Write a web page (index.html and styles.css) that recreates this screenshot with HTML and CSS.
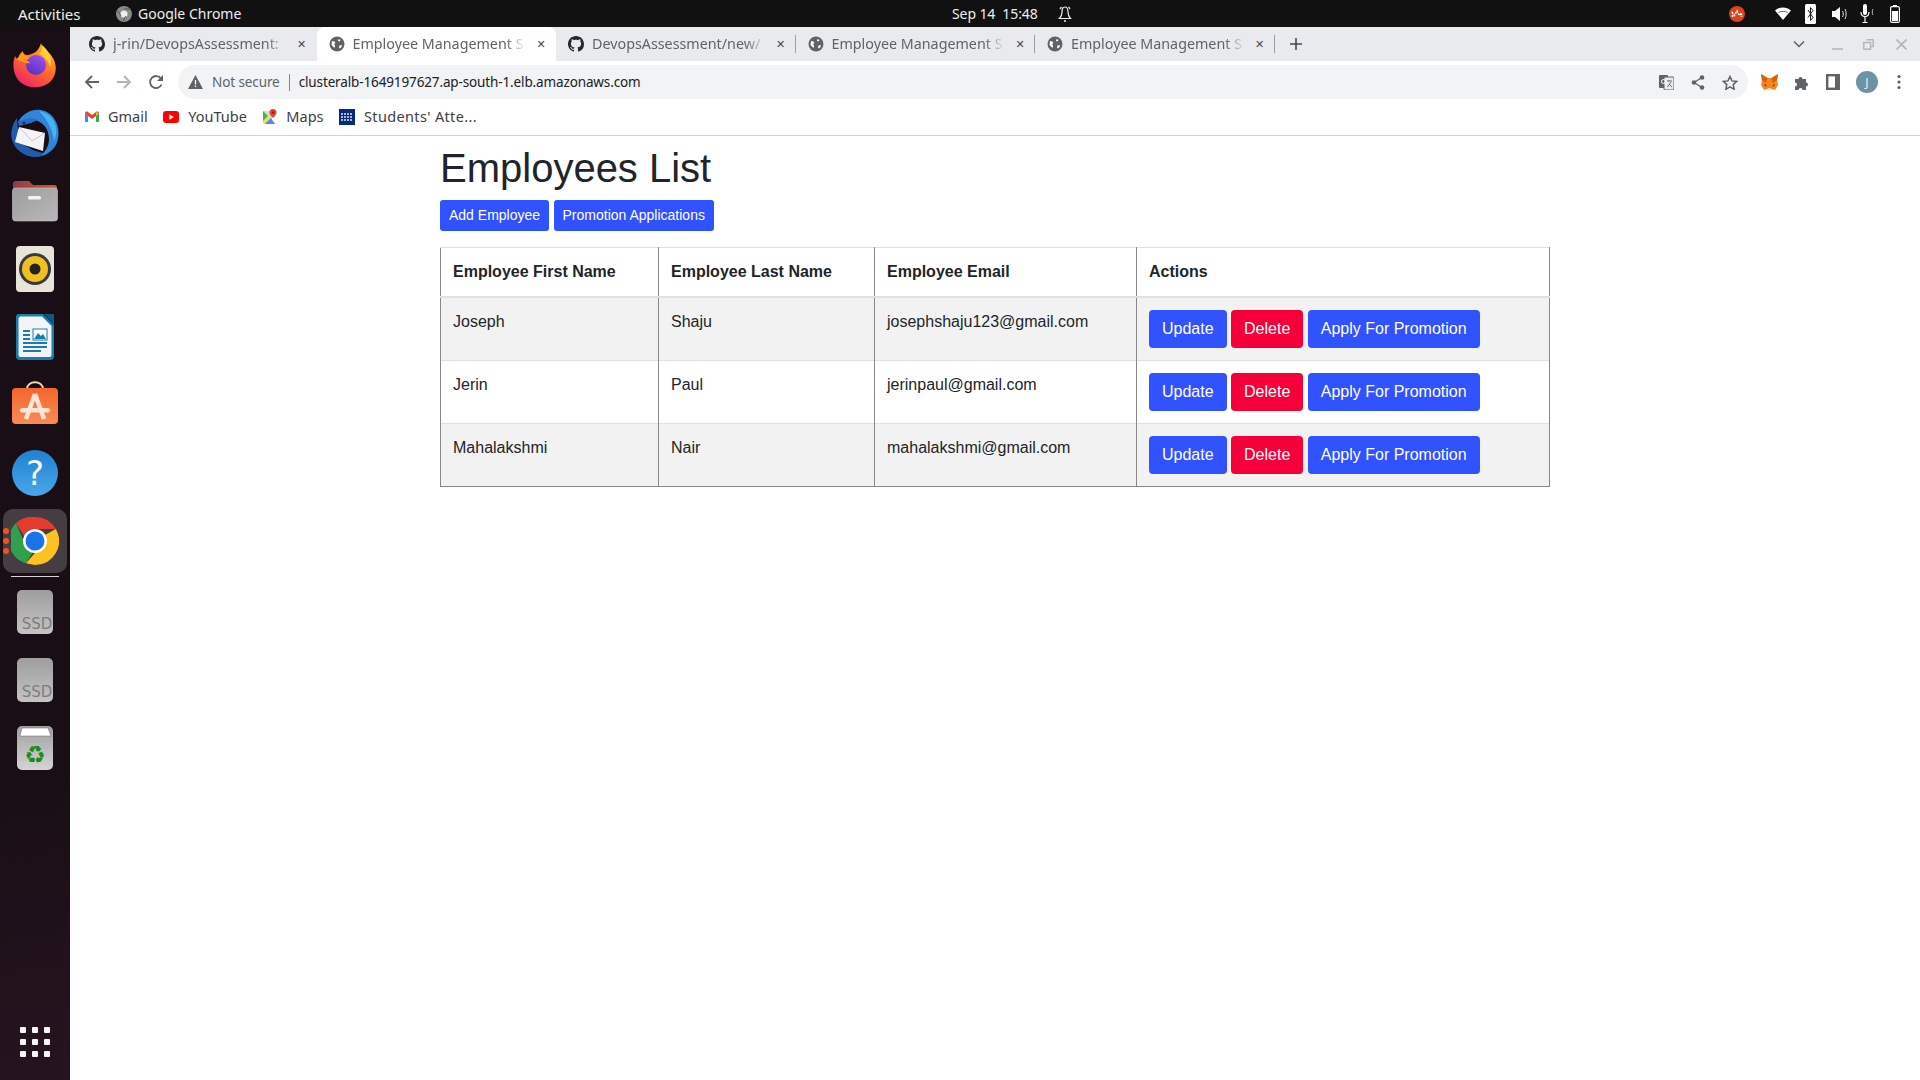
FILE: index.html
```html
<!DOCTYPE html>
<html lang="en">
<head>
    <meta charset="UTF-8">
    <title>Employee Management System</title>
    <link rel="stylesheet" href="styles.css">
</head>
<body>
    <svg class="defs" width="0" height="0">
        <symbol id="globe" viewBox="0 0 16 16">
            <circle cx="8" cy="8" r="7.5" fill="#5f6368"/>
            <path d="M3 5l2.500 .5 1 1.500-1.500 1 1 1.500 0 2-1 0L2.500 9zM9.500 3l2 1-1 1.500-1.500-.5zM10.500 9.500l2.500-.5-.5 2-1.500 1.500-1-1z" fill="#fff"/>
        </symbol>
        <symbol id="github" viewBox="0 0 16 16">
            <path fill="#24292e" d="M8 0C3.580 0 0 3.580 0 8c0 3.540 2.290 6.530 5.470 7.590.4.070.55-.17.55-.38 0-.19-.01-.82-.01-1.490-2.010.37-2.530-.49-2.690-.94-.09-.23-.48-.94-.82-1.130-.28-.15-.68-.52-.01-.53.63-.01 1.080.58 1.230.82.720 1.210 1.870.87 2.330.66.070-.52.280-.87.510-1.070-1.780-.2-3.640-.89-3.640-3.950 0-.87.310-1.590.820-2.150-.08-.2-.36-1.020.08-2.120 0 0 .67-.21 2.200.82.640-.18 1.320-.27 2-.27s1.360.09 2 .27c1.530-1.040 2.200-.82 2.200-.82.440 1.100.16 1.920.08 2.120.51.560.82 1.270.82 2.150 0 3.070-1.870 3.750-3.650 3.950.29.250.54.730.54 1.480 0 1.070-.01 1.930-.01 2.200 0 .21.150.46.550.38A8.010 8.010 0 0 0 16 8c0-4.420-3.580-8-8-8z"/>
        </symbol>
    </svg>

    <div class="topbar">
        <span class="topbar-activities">Activities</span>
        <span class="topbar-app">
            <svg width="16" height="16" viewBox="0 0 16 16"><circle cx="8" cy="8" r="8" fill="#8a8a8a"/><circle cx="8" cy="8" r="3.500" fill="#eee"/><path d="M8 3h6M5 10L2 5M10 10l-3 5" stroke="#555" stroke-width="1"/></svg>
            Google Chrome
        </span>
        <span class="topbar-clock">
            Sep 14&nbsp; 15:48
            <svg class="bell" width="14" height="18" viewBox="0 0 14 18" fill="none" stroke="#eee" stroke-width="1.200"><path d="M7 2C4.500 2 4 4 4 7c0 3-1 5-2.500 6.500h11C11 12 10 10 10 7c0-3-.5-5-3-5z"/><path d="M2 4C2.500 3 3 2.500 3.500 2M12 4c-.5-1-1-1.500-1.500-2"/><path d="M6 16h2" stroke-width="1.600"/></svg>
        </span>
        <div class="tray">
            <svg width="16" height="16" viewBox="0 0 16 16"><circle cx="8" cy="8" r="8" fill="#d8441c"/><path d="M3.500 11V7l2 2.500L8 5l2.500 4.500 2-2.500v4" fill="none" stroke="#fff" stroke-width="1.500" stroke-dasharray="2 1"/></svg>
            <svg class="tray-wifi" width="16" height="14" viewBox="0 0 16 14"><path d="M0 3.500C4.500-.5 11.500-.5 16 3.500L8 13z" fill="#fff"/><path d="M3.500 5.500c2.500-1.500 6.500-1.500 9 0" stroke="#222" stroke-width=".7" fill="none"/></svg>
            <svg class="tray-bt" width="11" height="20" viewBox="0 0 11 20"><rect width="11" height="20" rx="1.500" fill="#fff"/><path d="M3 6l5 7.500-2.500 3v-13L8 6.500 3 13.500" fill="none" stroke="#222" stroke-width="1"/></svg>
            <svg class="tray-vol" width="15" height="16" viewBox="0 0 15 16"><path d="M0 5h3l5-4v14l-5-4H0z" fill="#fff"/><path d="M10.500 5c1 2 1 4 0 6M13 3c1.500 3 1.500 7 0 10" stroke="#ddd" fill="none"/></svg>
            <svg class="tray-mic" width="16" height="20" viewBox="0 0 16 20"><rect x="3" y="0" width="4" height="11" rx="2" fill="#fff"/><path d="M1 8c0 6 8 6 8 0M5 13v5M2.500 18.500h5" stroke="#fff" fill="none" stroke-width="1.200"/><path d="M13 5c-1 2-1 4 0 6" stroke="#bbb" fill="none"/></svg>
            <svg class="tray-bat" width="10" height="18" viewBox="0 0 10 18"><rect x="3" y="0" width="4" height="2" fill="#fff"/><rect x=".6" y="1.600" width="8.800" height="15.800" rx="1.500" fill="none" stroke="#fff" stroke-width="1.200"/><rect x="2" y="6" width="6" height="10" fill="#fff"/></svg>
        </div>
    </div>

    <div class="desktop">
        <nav class="dock">
            <div class="dock-slot">
                <svg width="46" height="46" viewBox="0 0 46 46">
                    <defs>
                        <linearGradient id="ffbody" x1="0.800" y1="0" x2="0.200" y2="1"><stop offset="0" stop-color="#ffbd30"/><stop offset=".5" stop-color="#ff6a2a"/><stop offset="1" stop-color="#e81e6e"/></linearGradient>
                        <linearGradient id="ffglobe" x1="0.800" y1="0" x2="0.200" y2="1"><stop offset="0" stop-color="#9a50f0"/><stop offset="1" stop-color="#5b2fc0"/></linearGradient>
                    </defs>
                    <path d="M29 1c1 5 6 7 10 12 7 9 6 20-1 27-8 7-22 7-30 0C1 33 0 22 3 14c1 2 2 3 3 4 0-4 2-7 5-9 0 3 2 4 5 4 6-1 11-4 13-12z" fill="url(#ffbody)"/>
                    <circle cx="24" cy="23" r="10" fill="url(#ffglobe)"/>
                    <path d="M4 17c4-2 5-6 7-7 0 3 3 4 7 5-2 3-4 2-7 3 3 0 6 1 7 3-4 1-9-2-14-4z" fill="#ff9a1c"/>
                    <path d="M30 3c7 6 11 13 8 22-2-7-6-11-11-13 2-2 4-5 3-9z" fill="#ffd23a"/>
                </svg>
            </div>
            <div class="dock-slot">
                <svg width="48" height="50" viewBox="0 0 48 50">
                    <path d="M6 10C1 16-1 25 1 32c3 10 13 17 23 17 6 0 10-2 13-4-8 0-14-2-20-6L8 34z" fill="#1f5cae"/>
                    <path d="M7 14C14 1 32-3 42 9c8 10 7 26-1 33-3 3-7 5-11 6 5-5 8-11 8-17 0-10-6-17-14-19-6-1-12 0-17 2z" fill="#2f86d8"/>
                    <path d="M28 3c8 1 15 7 17 16 1 5 0 10-2 14-1-10-6-21-15-30z" fill="#48b4ef"/>
                    <path d="M7 14c5-3 14-5 20-2l-7 3-12 3z" fill="#2a6cc0"/>
                    <path d="M8 19l26 6-2 18L4 34z" fill="#f4f4f8"/>
                    <path d="M8 19l13 14 13-8" fill="none" stroke="#c4c6d0" stroke-width="1"/>
                    <circle cx="13" cy="15" r="1.500" fill="#16325c"/>
                </svg>
            </div>
            <div class="dock-slot">
                <svg width="46" height="42" viewBox="0 0 46 42">
                    <defs>
                        <linearGradient id="folderback" x1="0" y1="0" x2="1" y2="0"><stop offset="0" stop-color="#8e3a4c"/><stop offset="1" stop-color="#d4592c"/></linearGradient>
                        <linearGradient id="folderfront" x1="0" y1="0" x2="1" y2="1"><stop offset="0" stop-color="#9d9d9d"/><stop offset="1" stop-color="#b8b8b8"/></linearGradient>
                    </defs>
                    <path d="M1 4a3 3 0 0 1 3-3h13l4 4h21a3 3 0 0 1 3 3v14H1z" fill="url(#folderback)"/>
                    <rect x="0.500" y="8" width="45" height="33" rx="3" fill="url(#folderfront)" stroke="#c8c8c8" stroke-width=".6"/>
                    <rect x="16" y="16" width="13" height="3.500" rx="1.500" fill="#f4f4f4"/>
                </svg>
            </div>
            <div class="dock-slot">
                <svg width="38" height="46" viewBox="0 0 38 46">
                    <rect width="38" height="46" rx="4" fill="#e8e4da"/>
                    <circle cx="19" cy="23" r="16" fill="#3a3a3c"/>
                    <circle cx="19" cy="23" r="13" fill="#f0c020"/>
                    <circle cx="19" cy="23" r="5.500" fill="#222"/>
                </svg>
            </div>
            <div class="dock-slot">
                <svg width="38" height="46" viewBox="0 0 38 46">
                    <path d="M3 0h24l11 11v31a4 4 0 0 1-4 4H4a4 4 0 0 1-4-4V3a3 3 0 0 1 3-3z" fill="#1c7cae"/>
                    <path d="M4 2.500h22L35.500 12v29a2 2 0 0 1-2 2h-29a2 2 0 0 1-2-2V4z" fill="#f2f4f6"/>
                    <path d="M28 0l10 11V0z" fill="#14557e"/>
                    <path d="M7 17h7M7 21h7M7 25h7M7 29h24M7 33h24M7 37h18" stroke="#1c7cae" stroke-width="2"/>
                    <rect x="17" y="15" width="14" height="11" fill="#fff" stroke="#1c7cae"/>
                    <path d="M18 25l4-6 3 3 2-2 3 5z" fill="#1c7cae"/>
                </svg>
            </div>
            <div class="dock-slot dock-slot-bag">
                <svg width="46" height="43" viewBox="0 0 46 43">
                    <defs><linearGradient id="bag" x1="0" y1="0" x2="0" y2="1"><stop offset="0" stop-color="#f4662a"/><stop offset="1" stop-color="#f88c55"/></linearGradient></defs>
                    <path d="M15 8c0-9 16-9 16 0" fill="none" stroke="#f6d8b0" stroke-width="2"/>
                    <rect y="7" width="46" height="36" rx="4" fill="url(#bag)"/>
                    <path d="M23 13L14 38M23 13l9 25" stroke="#fde6d6" stroke-width="4.500" fill="none"/>
                    <rect x="8" y="27" width="30" height="4.500" rx="2" fill="#fde6d6"/>
                </svg>
            </div>
            <div class="dock-slot">
                <svg width="46" height="46" viewBox="0 0 46 46">
                    <defs><linearGradient id="help" x1="0" y1="0" x2="0" y2="1"><stop offset="0" stop-color="#2180d0"/><stop offset="1" stop-color="#48a8ea"/></linearGradient></defs>
                    <circle cx="23" cy="23" r="23" fill="url(#help)"/>
                    <text class="help-mark" x="23" y="35" text-anchor="middle">?</text>
                </svg>
            </div>
            <div class="dock-slot dock-slot-active">
                <div class="dock-running">
                    <span class="dock-dot"></span>
                    <span class="dock-dot"></span>
                    <span class="dock-dot"></span>
                </div>
                <svg width="48" height="48" viewBox="0 0 48 48">
                    <path d="M24 0a24 24 0 0 1 20.800 12H24a12 12 0 0 0-11 7L5 6A24 24 0 0 1 24 0z" fill="#e33b2e"/>
                    <path d="M5 6l8.500 20a12 12 0 0 0 8 9.700L15 46.300A24 24 0 0 1 5 6z" fill="#2fa04c"/>
                    <path d="M44.800 12A24 24 0 0 1 24 48l-9-1.700 9.500-11A12 12 0 0 0 34 18l10.800-6z" fill="#fcc31e"/>
                    <circle cx="24" cy="24" r="12" fill="#fff"/>
                    <circle cx="24" cy="24" r="9.500" fill="#1a73e8"/>
                </svg>
            </div>
            <div class="dock-sep"></div>
            <div class="dock-slot">
                <svg width="36" height="44" viewBox="0 0 36 44">
                    <defs><linearGradient id="ssd" x1="0" y1="0" x2="0" y2="1"><stop offset="0" stop-color="#9e9e9e"/><stop offset="1" stop-color="#c4c4c4"/></linearGradient></defs>
                    <rect width="36" height="44" rx="5" fill="url(#ssd)"/>
                    <text class="ssd-label" x="20" y="39" text-anchor="middle">SSD</text>
                </svg>
            </div>
            <div class="dock-slot">
                <svg width="36" height="44" viewBox="0 0 36 44">
                    <rect width="36" height="44" rx="5" fill="url(#ssd)"/>
                    <text class="ssd-label" x="20" y="39" text-anchor="middle">SSD</text>
                </svg>
            </div>
            <div class="dock-slot">
                <svg width="36" height="44" viewBox="0 0 36 44">
                    <defs><linearGradient id="bin" x1="0" y1="0" x2="0" y2="1"><stop offset="0" stop-color="#a0a0a0"/><stop offset="1" stop-color="#d4d4d4"/></linearGradient></defs>
                    <rect width="36" height="44" rx="5" fill="url(#bin)"/>
                    <path d="M5 2h26l3 8H3z" fill="#fff" stroke="#666" stroke-width=".5"/>
                    <text class="recycle" x="18" y="37" text-anchor="middle">♻</text>
                </svg>
            </div>
            <div class="dock-grid">
                <span></span><span></span><span></span>
                <span></span><span></span><span></span>
                <span></span><span></span><span></span>
            </div>
        </nav>

        <div class="browser">
            <div class="tabstrip">
                <div class="tab">
                    <svg class="favicon"><use href="#github"/></svg>
                    <span class="tab-title tab-title-first">j-rin/DevopsAssessment:</span>
                    <span class="tab-close">✕</span>
                </div>
                <div class="tab tab-active">
                    <svg class="favicon"><use href="#globe"/></svg>
                    <span class="tab-title">Employee Management S</span>
                    <span class="tab-close">✕</span>
                </div>
                <div class="tab tab-sep">
                    <svg class="favicon"><use href="#github"/></svg>
                    <span class="tab-title">DevopsAssessment/new/</span>
                    <span class="tab-close">✕</span>
                </div>
                <div class="tab tab-sep">
                    <svg class="favicon"><use href="#globe"/></svg>
                    <span class="tab-title">Employee Management S</span>
                    <span class="tab-close">✕</span>
                </div>
                <div class="tab tab-sep">
                    <svg class="favicon"><use href="#globe"/></svg>
                    <span class="tab-title">Employee Management S</span>
                    <span class="tab-close">✕</span>
                </div>
                <svg class="tab-new" width="14" height="14" viewBox="0 0 14 14"><path d="M7 1v12M1 7h12" stroke="#45494e" stroke-width="1.600"/></svg>
                <div class="window-btns">
                    <svg width="12" height="8" viewBox="0 0 12 8"><path d="M1 1.500l5 5 5-5" fill="none" stroke="#5f6368" stroke-width="1.500"/></svg>
                    <svg class="win-min" width="11" height="11" viewBox="0 0 11 11"><path d="M0 10h11" stroke="#b5b7ba" stroke-width="1.600"/></svg>
                    <svg class="win-max" width="11" height="11" viewBox="0 0 11 11"><path d="M3.500.8h6.700v6.700H7.500" fill="none" stroke="#b5b7ba" stroke-width="1.500"/><rect x=".8" y="3.500" width="6.700" height="6.700" fill="none" stroke="#b5b7ba" stroke-width="1.500"/></svg>
                    <svg class="win-close" width="11" height="11" viewBox="0 0 11 11"><path d="M.5.500l10 10M10.500.5l-10 10" stroke="#b5b7ba" stroke-width="1.700"/></svg>
                </div>
            </div>

            <div class="toolbar">
                <svg class="nav-btn" width="16" height="16" viewBox="0 0 16 16"><path d="M15 8H2M8 2L2 8l6 6" fill="none" stroke="#5f6368" stroke-width="1.800"/></svg>
                <svg class="nav-btn" width="16" height="16" viewBox="0 0 16 16"><path d="M1 8h13M8 2l6 6-6 6" fill="none" stroke="#b2b5b9" stroke-width="1.800"/></svg>
                <svg class="nav-btn" width="16" height="16" viewBox="0 0 16 16"><path d="M13.600 10.500A6 6 0 1 1 13 4.500" fill="none" stroke="#5f6368" stroke-width="1.800"/><path d="M15 1v6H9z" fill="#5f6368"/></svg>
                <div class="omnibox">
                    <svg width="15" height="14" viewBox="0 0 15 14"><path d="M7.500 0L15 14H0z" fill="#5f6368"/><path d="M7.500 5v4.500M7.500 10.500V12" stroke="#fff" stroke-width="1.300"/></svg>
                    <span class="omni-warn">Not secure</span>
                    <span class="omni-url">clusteralb-1649197627.ap-south-1.elb.amazonaws.com</span>
                    <div class="omni-icons">
                        <svg width="15" height="15" viewBox="0 0 15 15"><rect width="9" height="13" rx="1" fill="#5f6368"/><rect x="5" y="2" width="10" height="13" rx="1" fill="#e8eaed" stroke="#5f6368"/><circle cx="4.500" cy="6.500" r="2" fill="none" stroke="#fff"/><path d="M8 6h5M10 5v1M8.500 12l3.500-5M13 12l-3-3" stroke="#5f6368" stroke-width=".9" fill="none"/></svg>
                        <svg width="14" height="15" viewBox="0 0 14 15"><path d="M11 2.500L3 7.500l8 5" fill="none" stroke="#5f6368" stroke-width="1.300"/><circle cx="11" cy="2.500" r="2.300" fill="#5f6368"/><circle cx="3" cy="7.500" r="2.300" fill="#5f6368"/><circle cx="11" cy="12.500" r="2.300" fill="#5f6368"/></svg>
                        <svg width="16" height="15" viewBox="0 0 16 15"><path d="M8 1.500l2 4.400 4.800.5-3.600 3.200 1 4.700L8 11.900l-4.200 2.400 1-4.700L1.200 6.400 6 5.900z" fill="none" stroke="#5f6368" stroke-width="1.500"/></svg>
                    </div>
                </div>
                <div class="toolbar-ext">
                    <svg width="17" height="17" viewBox="0 0 17 17"><path d="M0 0l6.500 4h4L17 0l-1 6 1 5-3 5-3.500-1-2 .8-2-.8L3 16l-3-5 1-5z" fill="#f6851b"/><path d="M0 0l6.500 4L5 9 1 6zM17 0l-6.500 4L12 9l4-3z" fill="#d65f10"/><path d="M3.500 10l2 1.500-1.500 1zM13.500 10l-2 1.500 1.500 1z" fill="#333"/><path d="M6.500 14h4l-2 2z" fill="#eadfd4"/></svg>
                    <svg width="16" height="16" viewBox="0 0 16 16"><path d="M1 5h3.500a2 2 0 1 1 4 0H12v3.500a2 2 0 1 1 0 4V16H8.500a2 2 0 1 0-4 0H1v-3.500a2 2 0 1 0 0-4z" fill="#5f6368"/></svg>
                    <svg width="14" height="16" viewBox="0 0 14 16"><rect x="1.200" y="1.200" width="11.600" height="13.600" fill="#fff" stroke="#5f6368" stroke-width="2.400"/><rect x="9" y="1" width="4" height="14" fill="#5f6368"/></svg>
                    <span class="avatar">J</span>
                    <svg class="ext-menu" width="4" height="16" viewBox="0 0 4 16"><circle cx="2" cy="2.500" r="1.600" fill="#5f6368"/><circle cx="2" cy="8" r="1.600" fill="#5f6368"/><circle cx="2" cy="13.500" r="1.600" fill="#5f6368"/></svg>
                </div>
            </div>

            <div class="bookmarks">
                <span class="bookmark">
                    <svg width="14" height="11" viewBox="0 0 14 11"><path d="M0 2.500V10a1 1 0 0 0 1 1h2V5z" fill="#4285f4"/><path d="M14 2.500V10a1 1 0 0 1-1 1h-2V5z" fill="#34a853"/><path d="M0 2.500C0 .5 2 0 3 1l4 3 4-3c1-1 3-.5 3 1.500L11 5 7 8 3 5z" fill="#ea4335"/><path d="M11 1l3 1.500L11 5z" fill="#fbbc04"/></svg>
                    Gmail
                </span>
                <span class="bookmark">
                    <svg width="16" height="12" viewBox="0 0 16 12"><rect width="16" height="12" rx="3" fill="#f00"/><path d="M6.300 3.300L11 6 6.300 8.700z" fill="#fff"/></svg>
                    YouTube
                </span>
                <span class="bookmark">
                    <svg width="15" height="16" viewBox="0 0 15 16"><path d="M1 2h9v13l-9-1z" fill="#c8e6c0"/><path d="M1 13l6-6 5 8H2z" fill="#fbd75b"/><path d="M1 2l5 5-5 5z" fill="#4caf50"/><path d="M3 15l6-6 4 6z" fill="#4a8af4"/><path d="M11 0a3.500 3.500 0 0 1 3.500 3.500C14.500 6 11 9 11 9S7.500 6 7.500 3.500A3.500 3.500 0 0 1 11 0z" fill="#ea4335"/><circle cx="11" cy="3.500" r="1.200" fill="#8c1c13"/></svg>
                    Maps
                </span>
                <span class="bookmark">
                    <svg width="16" height="16" viewBox="0 0 16 16"><rect width="16" height="16" fill="#0a2a78"/><path d="M2 5h12M2 8h12M2 11h12" stroke="#dfe6f6" stroke-width="1.500" stroke-dasharray="2 1"/></svg>
                    <span class="bookmark-long">Students' Atte...</span>
                </span>
            </div>

            <main class="page">
                <div class="container">
                    <h2 class="page-title">Employees List</h2>
                    <div class="page-actions">
                        <button class="btn btn-sm btn-blue">Add Employee</button>
                        <button class="btn btn-sm btn-blue">Promotion Applications</button>
                    </div>
                    <table class="employees">
                        <thead>
                            <tr>
                                <th class="col-first">Employee First Name</th>
                                <th class="col-last">Employee Last Name</th>
                                <th class="col-email">Employee Email</th>
                                <th class="col-actions">Actions</th>
                            </tr>
                        </thead>
                        <tbody>
                            <tr>
                                <td>Joseph</td>
                                <td>Shaju</td>
                                <td>josephshaju123@gmail.com</td>
                                <td>
                                    <button class="btn btn-blue">Update</button>
                                    <button class="btn btn-red">Delete</button>
                                    <button class="btn btn-blue">Apply For Promotion</button>
                                </td>
                            </tr>
                            <tr>
                                <td>Jerin</td>
                                <td>Paul</td>
                                <td>jerinpaul@gmail.com</td>
                                <td>
                                    <button class="btn btn-blue">Update</button>
                                    <button class="btn btn-red">Delete</button>
                                    <button class="btn btn-blue">Apply For Promotion</button>
                                </td>
                            </tr>
                            <tr>
                                <td>Mahalakshmi</td>
                                <td>Nair</td>
                                <td>mahalakshmi@gmail.com</td>
                                <td>
                                    <button class="btn btn-blue">Update</button>
                                    <button class="btn btn-red">Delete</button>
                                    <button class="btn btn-blue">Apply For Promotion</button>
                                </td>
                            </tr>
                        </tbody>
                    </table>
                </div>
            </main>
        </div>
    </div>
</body>
</html>
```

FILE: styles.css
```css
/* General */
* {
    box-sizing: border-box;
}

body {
    margin: 0;
    height: 1080px;
    overflow: hidden;
    display: flex;
    flex-direction: column;
    background-color: white;
    color: #212529;
    font-family: "Liberation Sans", Arial, sans-serif;
    font-size: 16px;
}

.defs {
    display: block;
    height: 0;
}

/* Top bar */
.topbar {
    height: 27px;
    flex: none;
    display: grid;
    grid-template-columns: 98px 240px 596px auto 1fr;
    align-items: center;
    padding-left: 18px;
    background-color: #111111;
    color: #eeeeee;
    font-family: "Noto Sans", sans-serif;
    font-size: 14px;
}

.topbar-activities {
    font-size: 15px;
}

.topbar-app {
    display: flex;
    align-items: center;
    gap: 6px;
}

.topbar-clock {
    display: flex;
    align-items: center;
    grid-column: 4;
    letter-spacing: -0.1px;
    white-space: nowrap;
}

.bell {
    margin-left: 20px;
}

.tray {
    grid-column: 5;
    display: flex;
    align-items: center;
    justify-content: flex-end;
    padding-right: 20px;
}

.tray-wifi { margin-left: 30px; }
.tray-bt { margin-left: 14px; }
.tray-vol { margin-left: 16px; }
.tray-mic { margin-left: 13px; }
.tray-bat { margin-left: 14px; }

/* Dock */
.desktop {
    flex: 1;
    display: flex;
    min-height: 0;
}

.dock {
    width: 70px;
    flex: none;
    display: flex;
    flex-direction: column;
    align-items: center;
    padding: 4px 0 23px;
    background: linear-gradient(170deg, #190e16 70%, #25141f 100%);
}

.dock-slot {
    width: 64px;
    height: 68px;
    flex: none;
    display: flex;
    align-items: center;
    justify-content: center;
    position: relative;
}

.dock-slot-bag {
    padding-bottom: 6px;
}

.dock-slot-active {
    height: 64px;
    margin: 2px 0;
    border-radius: 10px;
    background-color: #463d42;
}

.dock-running {
    position: absolute;
    left: 0;
    top: 19px;
    display: flex;
    flex-direction: column;
    gap: 4px;
}

.dock-dot {
    width: 6px;
    height: 6px;
    border-radius: 50%;
    background-color: #e95420;
}

.dock-sep {
    width: 48px;
    height: 1px;
    flex: none;
    margin: 1px 0 1px;
    background-color: #d8d4d6;
}

.help-mark {
    font-family: "DejaVu Sans", sans-serif;
    font-size: 34px;
    fill: #f4f9fd;
}

.ssd-label {
    font-family: "DejaVu Sans", sans-serif;
    font-size: 15px;
    fill: #7d7d7d;
}

.recycle {
    font-family: "DejaVu Sans", sans-serif;
    font-size: 24px;
    fill: #1d8a1d;
}

.dock-grid {
    margin-top: auto;
    display: grid;
    grid-template-columns: repeat(3, 6px);
    gap: 6px;
}

.dock-grid span {
    height: 6px;
    border-radius: 1px;
    background-color: #f5f5f5;
}

/* Browser */
.browser {
    flex: 1;
    min-width: 0;
    display: flex;
    flex-direction: column;
}

.tabstrip {
    height: 34px;
    flex: none;
    display: flex;
    align-items: stretch;
    padding-left: 7px;
    background-color: #e8eaed;
    font-family: "Noto Sans", sans-serif;
    font-size: 14.3px;
    color: #5f6368;
}

.tab {
    width: 239.500px;
    flex: none;
    display: flex;
    align-items: center;
    gap: 8px;
    padding: 0 8px 0 12px;
    position: relative;
}

.tab-sep::after {
    content: "";
    position: absolute;
    right: 0;
    top: 8px;
    bottom: 8px;
    width: 1px;
    background-color: #9aa0a6;
}

.tab-active {
    background-color: white;
    border-radius: 8px 8px 0 0;
}

.favicon {
    width: 16px;
    height: 16px;
    flex: none;
}

.tab-title {
    flex: 1;
    min-width: 0;
    margin-bottom: 2px;
    white-space: nowrap;
    -webkit-mask-image: linear-gradient(to right, black 88%, transparent 100%);
    mask-image: linear-gradient(to right, black 88%, transparent 100%);
}

.tab-close {
    width: 14px;
    text-align: center;
    font-family: "DejaVu Sans", sans-serif;
    font-size: 11px;
    color: #45494e;
}

.tab-new {
    align-self: center;
    margin-left: 14px;
}

.window-btns {
    margin-left: auto;
    display: flex;
    align-items: center;
    padding-right: 13px;
}

.win-min { margin-left: 27px; }
.win-max { margin-left: 20px; }
.win-close { margin-left: 22px; }

.toolbar {
    height: 40px;
    flex: none;
    display: flex;
    align-items: center;
    padding: 2px 0 0 14px;
    background-color: white;
}

.nav-btn {
    margin-right: 16px;
}

.omnibox {
    width: 1570px;
    height: 34px;
    margin-left: -2px;
    flex: none;
    display: flex;
    align-items: center;
    padding-left: 10px;
    border-radius: 17px;
    background-color: #f1f3f4;
    font-family: "Noto Sans", sans-serif;
    font-size: 13.5px;
}

.omni-warn {
    margin-left: 9px;
    padding-right: 9px;
    border-right: 1px solid #80868b;
    line-height: 17px;
    color: #5f6368;
    letter-spacing: -0.1px;
}

.omni-url {
    margin-left: 9px;
    color: #202124;
    letter-spacing: -0.13px;
}

.omni-icons {
    margin-left: auto;
    display: flex;
    align-items: center;
    gap: 17px;
    padding-right: 10px;
}

.toolbar-ext {
    display: flex;
    align-items: center;
    gap: 16px;
    margin-left: 13px;
}

.ext-menu {
    margin-left: 3px;
}

.avatar {
    width: 22px;
    height: 22px;
    border-radius: 50%;
    display: flex;
    align-items: center;
    justify-content: center;
    background-color: #6f93a6;
    color: #e6eef2;
    font-family: "Noto Sans", sans-serif;
    font-size: 12px;
}

.bookmarks {
    height: 35px;
    flex: none;
    display: flex;
    align-items: center;
    gap: 15.5px;
    padding: 0 0 3px 15px;
    border-bottom: 1px solid #d4d4d4;
    font-family: "Noto Sans", sans-serif;
    font-size: 14.5px;
    color: #3c4043;
    background-color: white;
}

.bookmark {
    display: flex;
    align-items: center;
    gap: 9px;
    white-space: nowrap;
    line-height: 20px;
    padding-bottom: 2px;
}

.bookmark svg {
    margin-top: 2px;
}

.bookmark-long {
    letter-spacing: 0.35px;
}

/* Page content */
.page {
    flex: 1;
    min-height: 0;
    padding-top: 8px;
}

.container {
    width: 1140px;
    margin: 0 auto;
    padding: 0 15px;
}

.page-title {
    margin: 0 0 8px;
    font-size: 40px;
    font-weight: normal;
    line-height: 48px;
}

.page-actions {
    margin-bottom: 16px;
}

.btn {
    height: 38px;
    padding: 0 12px;
    border: 1px solid transparent;
    border-radius: 4px;
    color: white;
    font-family: "Liberation Sans", Arial, sans-serif;
    font-size: 16px;
    vertical-align: middle;
}

.btn-sm {
    height: 31px;
    padding: 0 8px 2px;
    border-radius: 3px;
    font-size: 14px;
}

.btn-blue {
    background-color: #3052ff;
}

.btn-red {
    background-color: #f50038;
}

/* Employee table */
.employees {
    width: 1109px;
    table-layout: fixed;
    border-collapse: collapse;
}

.col-first { width: 218px; }
.col-last { width: 216px; }
.col-email { width: 262px; }
.col-actions { width: 413px; }

.employees th,
.employees td {
    padding: 12px;
    text-align: left;
    vertical-align: top;
    line-height: 24px;
    border-top: 1px solid #dee2e6;
    border-left: 1px solid #888888;
    border-right: 1px solid #888888;
}

.employees th {
    border-bottom: 2px solid #dee2e6;
    font-weight: bold;
}

.employees tbody tr:nth-child(odd) {
    background-color: #f2f2f2;
}

.employees tbody tr:last-child td {
    border-bottom: 1px solid #888888;
}
```
